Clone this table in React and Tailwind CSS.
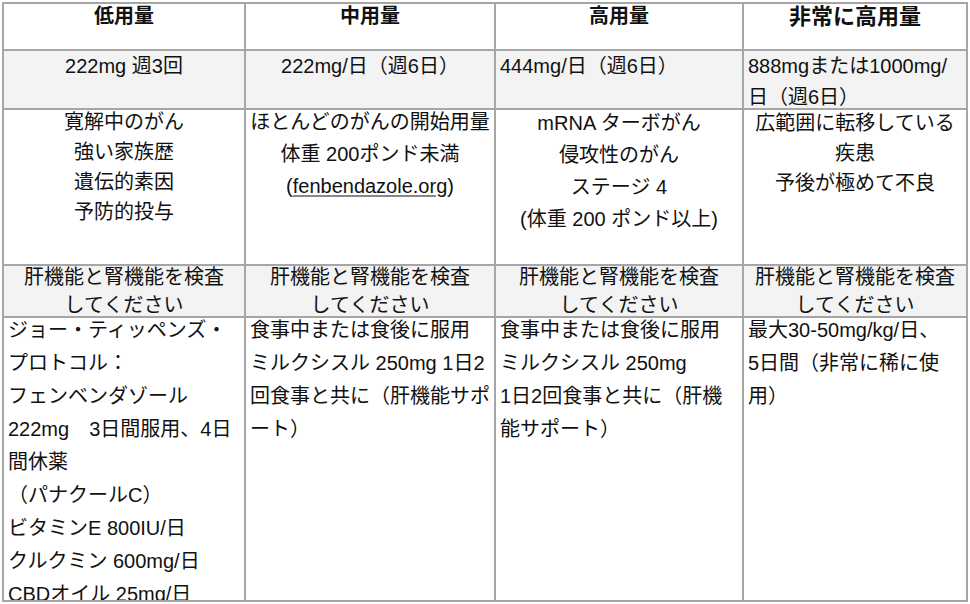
import React from "react";

function Cell({ className = "", children }) {
  return <div className={"overflow-hidden whitespace-nowrap " + className}>{children}</div>;
}

export default function App() {
  return (
    <div className="pl-[2px] pt-[2px] bg-white font-['Liberation_Sans','Noto_Sans_CJK_JP',sans-serif] text-[20px] text-[#111]">
      <div className="grid w-[966px] grid-cols-[240px_248px_246px_222px] grid-rows-[45px_57px_154px_50px_282px] gap-[2px] p-[2px] bg-[#a6a6a6]">
        {/* header */}
        <Cell className="bg-white text-center font-bold leading-[25px]">低用量</Cell>
        <Cell className="bg-white text-center font-bold leading-[25px]">中用量</Cell>
        <Cell className="bg-white text-center font-bold leading-[25px]">高用量</Cell>
        <Cell className="bg-white text-center font-bold leading-[25px] text-[22px]">非常に高用量</Cell>

        {/* dose */}
        <Cell className="bg-[#f3f3f3] text-center leading-[31px]">222mg 週3回</Cell>
        <Cell className="bg-[#f3f3f3] text-center leading-[31px]">222mg/日（週6日）</Cell>
        <Cell className="bg-[#f3f3f3] pl-1 leading-[31px]">444mg/日（週6日）</Cell>
        <Cell className="bg-[#f3f3f3] pl-1 leading-[31px]">
          888mgまたは1000mg/
          <br />
          日（週6日）
        </Cell>

        {/* who */}
        <Cell className="bg-white text-center">
          <div className="-mt-[3px] leading-[30px]">
            寛解中のがん
            <br />
            強い家族歴
            <br />
            遺伝的素因
            <br />
            予防的投与
          </div>
        </Cell>
        <Cell className="bg-white text-center">
          <div className="-mt-[4px] leading-[32px]">
            ほとんどのがんの開始用量
            <br />
            体重 200ポンド未満
            <br />
            (<a href="#" className="underline decoration-[#888] underline-offset-2">fenbendazole.org</a>)
          </div>
        </Cell>
        <Cell className="bg-white text-center">
          <div className="-mt-[3px] leading-[32px]">
            mRNA ターボがん
            <br />
            侵攻性のがん
            <br />
            ステージ 4
            <br />
            (体重 200 ポンド以上)
          </div>
        </Cell>
        <Cell className="bg-white text-center">
          <div className="-mt-[2px] leading-[30px]">
            広範囲に転移している
            <br />
            疾患
            <br />
            予後が極めて不良
          </div>
        </Cell>

        {/* checks */}
        {[0, 1, 2, 3].map((i) => (
          <Cell key={i} className="bg-[#f3f3f3] text-center">
            <div className="-mt-[3px] leading-[28px]">
              肝機能と腎機能を検査
              <br />
              してください
            </div>
          </Cell>
        ))}

        {/* notes */}
        <Cell className="bg-white pl-1">
          <div className="-mt-[4px] leading-[33px]">
            ジョー・ティッペンズ・
            <br />
            プロトコル：
            <br />
            フェンベンダゾール
            <br />
            222mg　3日間服用、4日
            <br />
            間休薬
            <br />
            （パナクールC）
            <br />
            ビタミンE 800IU/日
            <br />
            クルクミン 600mg/日
            <br />
            CBDオイル 25mg/日
          </div>
        </Cell>
        <Cell className="bg-white pl-1">
          <div className="-mt-[4px] leading-[33px]">
            食事中または食後に服用
            <br />
            ミルクシスル 250mg 1日2
            <br />
            回食事と共に（肝機能サポ
            <br />
            ート）
          </div>
        </Cell>
        <Cell className="bg-white pl-1">
          <div className="-mt-[4px] leading-[33px]">
            食事中または食後に服用
            <br />
            ミルクシスル 250mg
            <br />
            1日2回食事と共に（肝機
            <br />
            能サポート）
          </div>
        </Cell>
        <Cell className="bg-white pl-1">
          <div className="-mt-[4px] leading-[33px]">
            最大30-50mg/kg/日、
            <br />
            5日間（非常に稀に使
            <br />
            用）
          </div>
        </Cell>
      </div>
    </div>
  );
}
